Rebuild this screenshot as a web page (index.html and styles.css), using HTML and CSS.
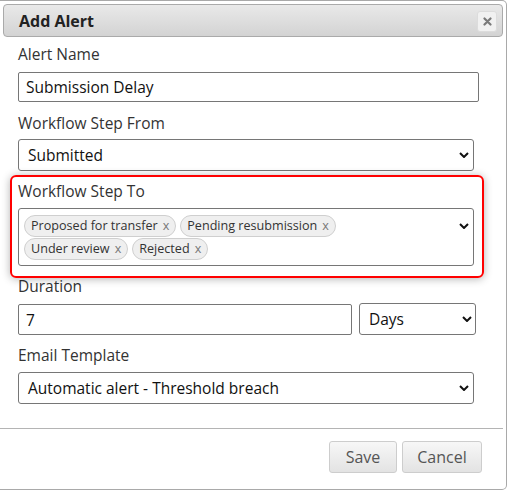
FILE: index.html
```html
<!DOCTYPE html>
<html lang="en">
<head>
<meta charset="utf-8">
<title>Add Alert</title>
<link rel="stylesheet" href="styles.css">
</head>
<body>
<div class="dialog">
  <div class="titlebar">
    <span class="title">Add Alert</span>
    <button class="close" type="button" aria-label="Close">
      <svg width="9" height="9" viewBox="0 0 9 9"><path d="M1.5 1.5 L7.5 7.5 M7.5 1.5 L1.5 7.5" stroke="#7a7a7a" stroke-width="2.2" stroke-linecap="round"/></svg>
    </button>
  </div>
  <div class="form">
    <div class="field field-first">
      <label class="label label-wide">Alert Name</label>
      <div class="input input-name">Submission Delay</div>
    </div>
    <div class="field">
      <label class="label label-tight">Workflow Step From</label>
      <div class="select select-full"><span>Submitted</span><svg class="chev" width="10" height="6" viewBox="0 0 10 6"><path d="M1 1 L5 5 L9 1" fill="none" stroke="#111" stroke-width="2"/></svg></div>
    </div>
    <div class="field field-highlight">
      <label class="label">Workflow Step To</label>
      <div class="multi">
        <div class="chips">
          <span class="chip">Proposed for transfer<span class="chip-x">x</span></span>
          <span class="chip">Pending resubmission<span class="chip-x">x</span></span>
          <span class="chip">Under review<span class="chip-x">x</span></span>
          <span class="chip">Rejected<span class="chip-x">x</span></span>
        </div>
        <svg class="chev chev-multi" width="10" height="6" viewBox="0 0 10 6"><path d="M1 1 L5 5 L9 1" fill="none" stroke="#111" stroke-width="2"/></svg>
      </div>
      <div class="highlight"></div>
    </div>
    <div class="field">
      <label class="label">Duration</label>
      <div class="row">
        <div class="input input-duration">7</div>
        <div class="select select-unit"><span>Days</span><svg class="chev" width="10" height="6" viewBox="0 0 10 6"><path d="M1 1 L5 5 L9 1" fill="none" stroke="#111" stroke-width="2"/></svg></div>
      </div>
    </div>
    <div class="field field-last">
      <label class="label">Email Template</label>
      <div class="select select-full"><span>Automatic alert - Threshold breach</span><svg class="chev" width="10" height="6" viewBox="0 0 10 6"><path d="M1 1 L5 5 L9 1" fill="none" stroke="#111" stroke-width="2"/></svg></div>
    </div>
  </div>
  <div class="footer">
    <button class="btn btn-save" type="button">Save</button>
    <button class="btn btn-cancel" type="button">Cancel</button>
  </div>
</div>
</body>
</html>
```
FILE: styles.css
```css
* { box-sizing: border-box; }
body {
  margin: 0;
  background: #fff;
  font-family: "Open Sans", "Noto Sans", sans-serif;
}
.dialog {
  width: 507px;
  border: 1px solid #a9a9a9;
  border-left: none;
  border-radius: 0 5px 5px 0;
  padding-top: 3px;
  background: #fff;
}
.titlebar {
  margin: 0 3px;
  height: 33px;
  border: 1px solid #aaa;
  border-radius: 4px;
  background: linear-gradient(#e9e9e9, #d3d3d3);
  display: flex;
  align-items: center;
  justify-content: space-between;
  padding: 0 5px 0 15px;
}
.title {
  font-weight: 700;
  font-size: 16px;
  line-height: 20px;
  color: #222;
}
.close {
  width: 20px;
  height: 21px;
  margin-top: 1px;
  padding: 0;
  border: 1px solid #dcdcdc;
  border-radius: 3px;
  background: #f1f1f1;
  display: flex;
  align-items: center;
  justify-content: center;
}
.form {
  padding: 7px 0 0 18px;
}
.field {
  margin-bottom: 10px;
}
.field-first { margin-bottom: 11px; }
.field-last { margin-bottom: 24px; }
.field-highlight { position: relative; }
.label {
  display: block;
  font-size: 15.5px;
  line-height: 20px;
  color: #333;
  margin-bottom: 7px;
}
.label-wide { margin-bottom: 8px; }
.label-tight { margin-bottom: 6px; }
.input, .select {
  border: 1px solid #767676;
  font-size: 15.5px;
  color: #111;
  display: flex;
  align-items: center;
}
.input {
  border-radius: 2px;
  padding-left: 7px;
}
.select {
  border-radius: 3px;
  padding: 0 4px 0 9px;
  height: 32px;
  justify-content: space-between;
}
.input-name { width: 461px; height: 30px; }
.select-full { width: 456px; }
.row {
  display: flex;
  align-items: flex-end;
  gap: 7px;
}
.input-duration { width: 334px; height: 31px; }
.select-unit { width: 117px; padding-right: 3px; }
.multi {
  width: 456px;
  height: 58px;
  border: 1px solid #767676;
  border-radius: 3px;
  padding: 6px 4px 0 5px;
  display: flex;
  justify-content: space-between;
  align-items: flex-start;
}
.chips {
  width: 400px;
  display: flex;
  flex-wrap: wrap;
  column-gap: 4px;
  row-gap: 1px;
}
.chip {
  height: 22px;
  border: 1px solid #cfcfcf;
  border-radius: 11px;
  background: #efefef;
  padding: 0 6px 0 6px;
  font-size: 12.6px;
  line-height: 20px;
  color: #333;
  display: inline-flex;
  align-items: center;
}
.chip-x {
  margin-left: 5px;
  color: #777;
}
.chev-multi { margin-top: 8px; }
.highlight {
  position: absolute;
  top: -6px;
  left: -8px;
  width: 474px;
  height: 103px;
  border: 2px solid #ff0000;
  border-radius: 6px;
  box-shadow: 0 1px 8px rgba(0, 0, 0, 0.3);
  pointer-events: none;
}
.footer {
  margin-right: 3px;
  border-top: 1px solid #b4b4b4;
  padding: 12px 21px 16px 0;
  display: flex;
  justify-content: flex-end;
  gap: 5px;
}
.btn {
  height: 32px;
  border: 1px solid #cdcdcd;
  border-radius: 3px;
  background: linear-gradient(#f7f7f7, #e3e3e3);
  font-family: "Open Sans", "Noto Sans", sans-serif;
  font-size: 16px;
  color: #555;
  padding: 0;
}
.btn-save { width: 68px; }
.btn-cancel { width: 80px; }
```
